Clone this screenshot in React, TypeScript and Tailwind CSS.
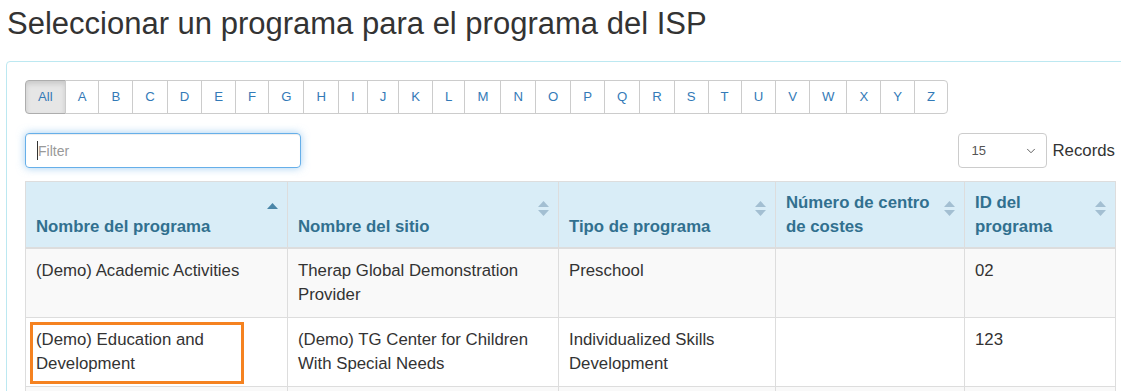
import React from "react";
import { ChevronDown } from "lucide-react";

const letters = ["All", ..."ABCDEFGHIJKLMNOPQRSTUVWXYZ".split("")];

type Col = { label: React.ReactNode; width: string; sort: "asc" | "both" };

const columns: Col[] = [
  { label: "Nombre del programa", width: "w-[262px]", sort: "asc" },
  { label: "Nombre del sitio", width: "w-[271px]", sort: "both" },
  { label: "Tipo de programa", width: "w-[217px]", sort: "both" },
  { label: "Número de centro de costes", width: "w-[189px]", sort: "both" },
  { label: "ID del programa", width: "w-[151px]", sort: "both" },
];

const rows = [
  ["(Demo) Academic Activities", "Therap Global Demonstration Provider", "Preschool", "", "02"],
  ["(Demo) Education and Development", "(Demo) TG Center for Children With Special Needs", "Individualized Skills Development", "", "123"],
  ["", "", "", "", ""],
];

const SortIcon = ({ sort }: { sort: "asc" | "both" }) => {
  if (sort === "asc") {
    return (
      <svg width="11" height="6" viewBox="0 0 11 6" className="absolute right-[9px] top-[21px]">
        <path d="M5.5 0 L11 6 L0 6 Z" fill="#4a86a8" />
      </svg>
    );
  }
  return (
    <svg width="11" height="15" viewBox="0 0 11 15" className="absolute right-[9px] top-[19px]">
      <path d="M5.5 0 L11 6 L0 6 Z" fill="#a3bfd2" />
      <path d="M0 9 L11 9 L5.5 15 Z" fill="#a3bfd2" />
    </svg>
  );
};

const App = () => {
  return (
    <div className="w-full overflow-hidden bg-white text-[#333]" style={{ fontFamily: '"Liberation Sans", Arial, sans-serif' }}>
      <h1 className="pt-[7px] pl-[7px] text-[31px] leading-[34px] font-normal text-[#333]">
        Seleccionar un programa para el programa del ISP
      </h1>

      {/* Panel */}
      <div className="mt-[20px] ml-[6px] w-[1128px] rounded-[4px] border border-[#bce8f1] pl-[18px] pr-[18px] pt-[18px] pb-[20px]">
        {/* Alphabet filter */}
        <div className="flex">
          {letters.map((l, i) => (
            <button
              key={l}
              className={
                i === 0
                  ? "rounded-l-[4px] border border-[#adadad] bg-[#e6e6e6] px-3 py-[6px] text-[13.2px] leading-5 text-[#337ab7] shadow-[inset_0_3px_5px_rgba(0,0,0,0.125)]"
                  : i === letters.length - 1
                  ? "-ml-px rounded-r-[4px] border border-[#ccc] bg-white px-3 py-[6px] text-[13.2px] leading-5 text-[#337ab7]"
                  : "-ml-px border border-[#ccc] bg-white px-3 py-[6px] text-[13.2px] leading-5 text-[#337ab7]"
              }
            >
              {l}
            </button>
          ))}
        </div>

        {/* Filter + records */}
        <div className="mt-[19px] flex items-center justify-between">
          <div className="relative">
            <input
              placeholder="Filter"
              className="h-[35px] w-[276px] rounded-[4px] border border-[#66afe9] px-3 text-[14px] text-[#555] shadow-[inset_0_1px_1px_rgba(0,0,0,0.075),0_0_8px_rgba(102,175,233,0.6)] outline-none placeholder:text-[#999]"
            />
            <span className="absolute left-[12px] top-[8px] h-[19px] w-px bg-[#333]" />
          </div>
          <div className="flex items-center gap-[6px]">
            <div className="relative">
              <select className="h-[35px] w-[89px] appearance-none rounded-[4px] border border-[#ccc] bg-white pl-[13px] text-[13px] text-[#555] outline-none">
                <option>15</option>
                <option>25</option>
                <option>50</option>
              </select>
              <ChevronDown size={14} strokeWidth={1.6} className="pointer-events-none absolute right-[9px] top-[11px] text-[#555]" />
            </div>
            <span className="text-[16.8px] leading-6 text-[#333]">Records</span>
          </div>
        </div>

        {/* Table */}
        <table className="mt-[13px] w-[1090px] table-fixed border-collapse text-[16.8px] leading-6">
          <thead>
            <tr className="bg-[#d9edf7]">
              {columns.map((c, i) => (
                <th
                  key={i}
                  className={`${c.width} relative border-x border-t border-b-2 border-[#ddd] pl-[10px] pr-[30px] pt-[9px] pb-[8px] text-left align-bottom font-bold text-[#31708f]`}
                >
                  {c.label}
                  <SortIcon sort={c.sort} />
                </th>
              ))}
            </tr>
          </thead>
          <tbody>
            {rows.map((r, ri) => (
              <tr key={ri} className={ri % 2 === 0 ? "bg-[#f9f9f9]" : "bg-white"}>
                {r.map((cell, ci) => (
                  <td key={ci} className="relative h-[69px] border border-[#ddd] px-[10px] py-[10px] align-top text-[#333]">
                    {cell}
                    {ri === 1 && ci === 0 && (
                      <span className="pointer-events-none absolute left-[4px] top-[4px] h-[62px] w-[214px] border-[3px] border-[#f58220]" />
                    )}
                  </td>
                ))}
              </tr>
            ))}
          </tbody>
        </table>
      </div>
    </div>
  );
};

export default App;
